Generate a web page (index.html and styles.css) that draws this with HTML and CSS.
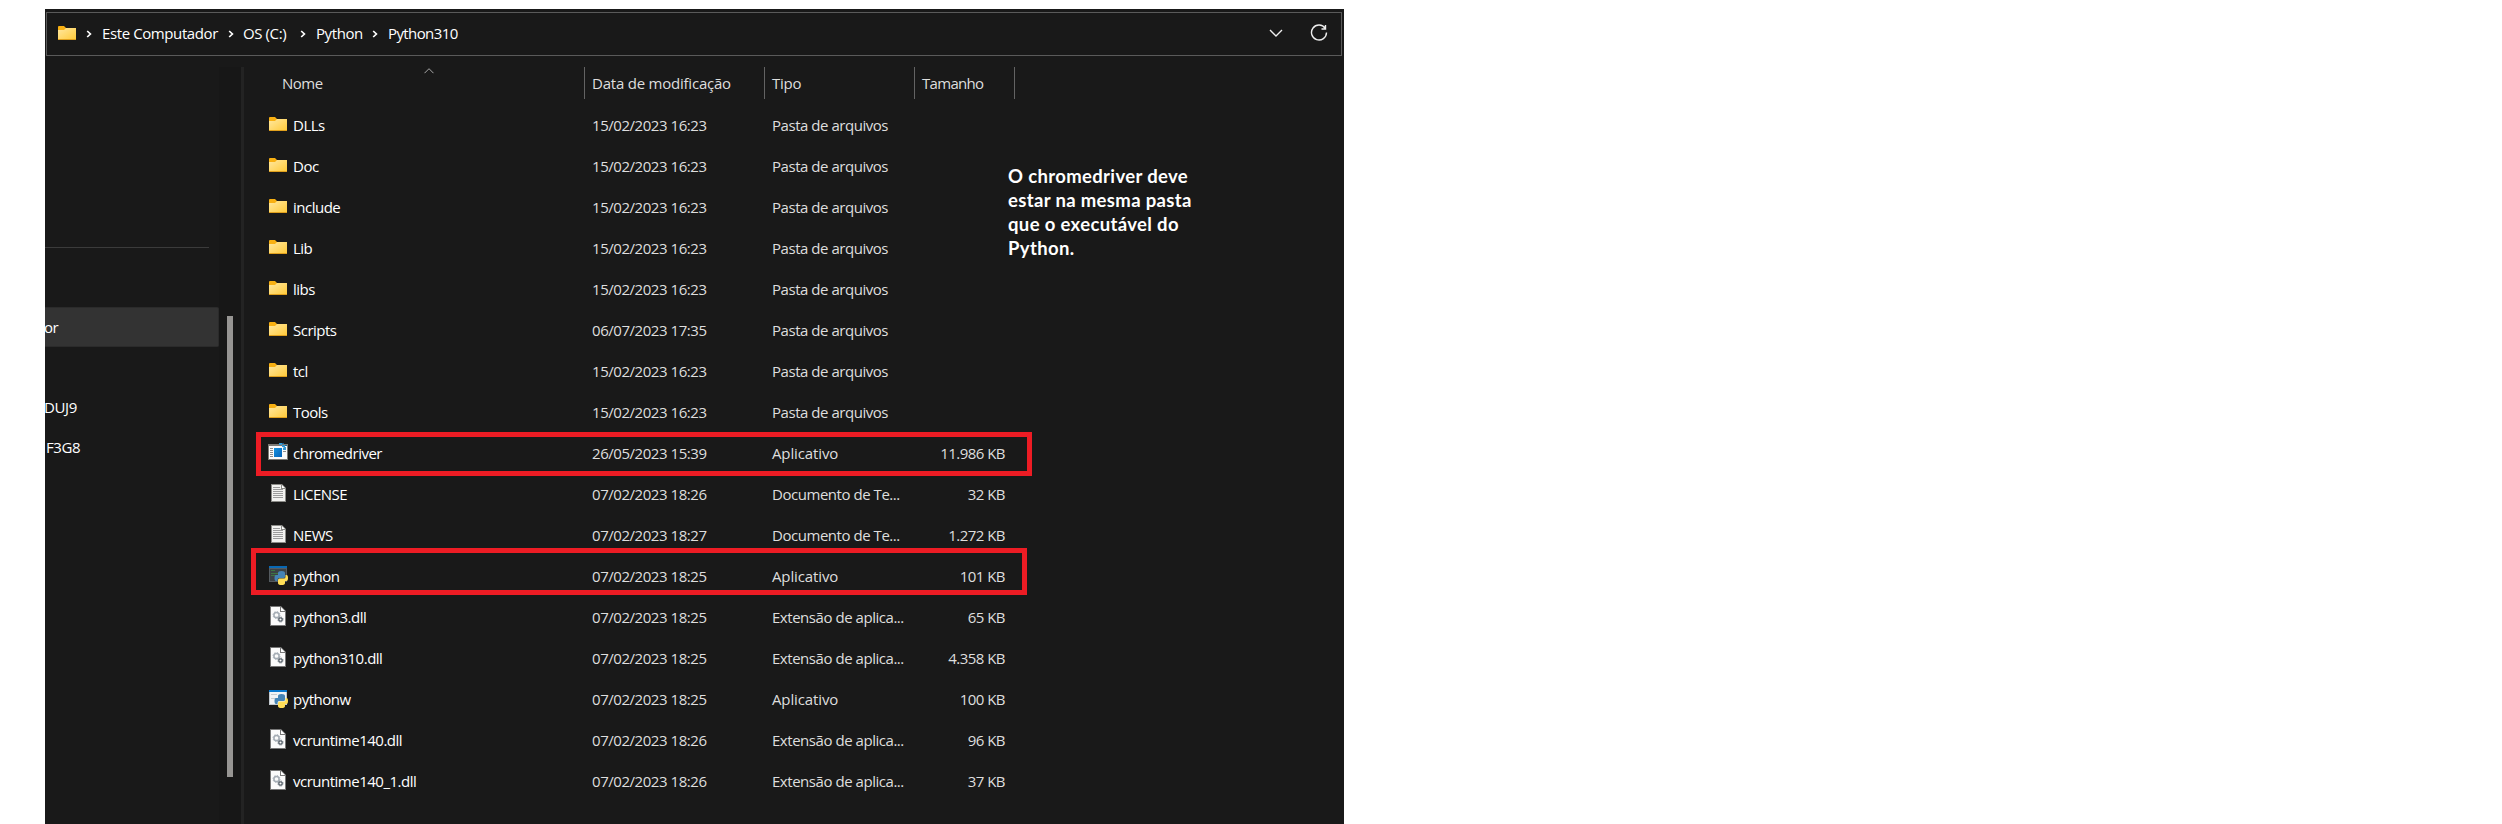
FILE: index.html
```
<!DOCTYPE html>
<html lang="pt-BR">
<head>
<meta charset="utf-8">
<title>Python310</title>
<link rel="stylesheet" href="styles.css">
</head>
<body>
<svg class="defs" width="0" height="0">
  <defs>
    <linearGradient id="gold" x1="0" y1="0" x2="1" y2="1"><stop offset="0" stop-color="#ffe8a0"/><stop offset="1" stop-color="#ffc937"/></linearGradient>
    <linearGradient id="blue" x1="0" y1="0" x2="1" y2="1"><stop offset="0" stop-color="#1593e2"/><stop offset="1" stop-color="#0562b8"/></linearGradient>
    <g id="snake"><path d="M10 10V8q0-2 3.500-2T17 8v3.500q0 1.500-1.500 1.500H11q-1.500 0-1.500 3H8q-1.500 0-1.500-3T8 10z" fill="#4584b6"/><path d="M17.500 10H18.500q1.500 0 1.500 3t-1.500 3H17v2q0 2-3.500 2T10 18v-3q0-1.500 1.500-1.500H16q1.500 0 1.500-1.500z" fill="#ffde57"/></g>
  </defs>
  <symbol id="folder" viewBox="0 0 20 20"><path d="M1 4q0-1 1-1h5l2 2h9q1 0 1 1v3H1z" fill="#f8b012"/><path d="M1 7h6l2-2h10v12H1z" fill="url(#gold)"/><path d="M1 16h18v1H1z" fill="#e0a01d"/></symbol>
  <symbol id="app" viewBox="0 0 20 20"><path d="M0 2h20v16H0z" fill="#7b7975"/><path d="M1 4h18v13H1z" fill="#fafafa"/><path d="M2 6.500h3M2 8.500h3M2 10.500h3M2 12.500h3M2 14.500h3M15 9.500h3" stroke="#8b8b8b"/><path d="M6 6h8v9H6z" fill="url(#blue)"/><path d="M11 1h3v2h-3zM14 3h3v2h-3zM16 5h2v3h-3V6z" fill="#3499d4"/><path d="M14 1h2v1h-2zM17 3h2v1h-2z" fill="#176394"/></symbol>
  <symbol id="text" viewBox="0 0 20 20"><path d="M3 1h11l4 4v14H3z" fill="#8b8b87"/><path d="M4 2h9v4h4v12H4z" fill="#f2f2f0"/><path d="M14 2v3h3" fill="#fff"/><path d="M5 4.500h7M5 6.500h10M5 8.500h10M5 10.500h10M5 12.500h10M5 14.500h10" stroke="#9c9c9c"/></symbol>
  <symbol id="python" viewBox="0 0 20 20"><path d="M1 1h18v16H1z" fill="#555b60"/><path d="M1 1h18v2H1z" fill="#0868b4"/><path d="M2 4h16v12H2z" fill="#3c4246"/><path d="M3 5.500h4M3 8.500h8M3 10.500h5" stroke="#3d7543"/><use href="#snake"/></symbol>
  <symbol id="pythonw" viewBox="0 0 20 20"><path d="M1 2h18v15H1z" fill="#c2c8cd"/><path d="M1 2h18v2H1z" fill="#0878ce"/><path d="M2 4h16v12H2z" fill="#f1f3f5"/><path d="M3 6.500h6M3 10.500h5" stroke="#c6cbd0"/><use href="#snake"/></symbol>
  <symbol id="dll" viewBox="0 0 20 20"><path d="M2 0h11l5 5v15H2z" fill="#777"/><path d="M3 1h9v5h5v13H3z" fill="#fbfbfb"/><path d="M13 1v4h4z" fill="#fff"/><circle cx="8.500" cy="9" r="2.600" fill="none" stroke="#a5adb5" stroke-width="1.500"/><circle cx="8.500" cy="9" r="3.500" fill="none" stroke="#a5adb5" stroke-dasharray="1.200 1.550"/><circle cx="12.500" cy="13.500" r="1.700" fill="none" stroke="#59636c" stroke-width="1.300"/><circle cx="12.500" cy="13.500" r="2.500" fill="none" stroke="#59636c" stroke-dasharray="1 .96"/></symbol>
  <symbol id="chev" viewBox="0 0 6 8"><path d="M1.200 1L4.400 4L1.200 7" fill="none" stroke="#fff" stroke-width="1.700"/></symbol>
</svg>
<div class="window">
  <div class="address">
    <svg class="ico"><use href="#folder"/></svg>
    <svg class="sep s1"><use href="#chev"/></svg><span class="c1">Este Computador</span>
    <svg class="sep"><use href="#chev"/></svg><span class="c2">OS (C:)</span>
    <svg class="sep"><use href="#chev"/></svg><span class="c3">Python</span>
    <svg class="sep"><use href="#chev"/></svg><span class="c4">Python310</span>
    <div class="tools">
      <svg width="14" height="8" viewBox="0 0 14 8"><path d="M1 1l6 6 6-6" fill="none" stroke="#eee" stroke-width="1.400"/></svg>
      <svg width="18" height="18" viewBox="0 0 18 18"><path d="M15.200 4.300A7.500 7.500 0 1 0 16.500 8.500M15.500 1v4h-4" fill="none" stroke="#eee" stroke-width="1.400"/></svg>
    </div>
  </div>
  <div class="main">
    <div class="nav">
      <div class="rule"></div>
      <div class="item selected"><span>or</span></div>
      <div class="item second"><span>DUJ9</span></div>
      <div class="item third"><span>F3G8</span></div>
    </div>
    <div class="scroll"><div class="thumb"></div></div>
    <div class="files">
      <div class="row head"><div class="name">Nome<svg class="sort" width="10" height="6" viewBox="0 0 10 6"><path d="M.5 5.200L5 .7l4.500 4.500" fill="none" stroke="#aaa"/></svg></div><div class="date">Data de modificação</div><div class="type">Tipo</div><div class="size">Tamanho</div></div>
      <div class="row"><div class="name"><svg class="ico"><use href="#folder"/></svg>DLLs</div><div class="date">15/02/2023 16:23</div><div class="type">Pasta de arquivos</div><div class="size"></div></div>
      <div class="row"><div class="name"><svg class="ico"><use href="#folder"/></svg>Doc</div><div class="date">15/02/2023 16:23</div><div class="type">Pasta de arquivos</div><div class="size"></div></div>
      <div class="row"><div class="name"><svg class="ico"><use href="#folder"/></svg>include</div><div class="date">15/02/2023 16:23</div><div class="type">Pasta de arquivos</div><div class="size"></div></div>
      <div class="row"><div class="name"><svg class="ico"><use href="#folder"/></svg>Lib</div><div class="date">15/02/2023 16:23</div><div class="type">Pasta de arquivos</div><div class="size"></div></div>
      <div class="row"><div class="name"><svg class="ico"><use href="#folder"/></svg>libs</div><div class="date">15/02/2023 16:23</div><div class="type">Pasta de arquivos</div><div class="size"></div></div>
      <div class="row"><div class="name"><svg class="ico"><use href="#folder"/></svg>Scripts</div><div class="date">06/07/2023 17:35</div><div class="type">Pasta de arquivos</div><div class="size"></div></div>
      <div class="row"><div class="name"><svg class="ico"><use href="#folder"/></svg>tcl</div><div class="date">15/02/2023 16:23</div><div class="type">Pasta de arquivos</div><div class="size"></div></div>
      <div class="row"><div class="name"><svg class="ico"><use href="#folder"/></svg>Tools</div><div class="date">15/02/2023 16:23</div><div class="type">Pasta de arquivos</div><div class="size"></div></div>
      <div class="row"><div class="name"><svg class="ico"><use href="#app"/></svg>chromedriver</div><div class="date">26/05/2023 15:39</div><div class="type app">Aplicativo</div><div class="size">11.986 KB</div></div>
      <div class="row"><div class="name"><svg class="ico"><use href="#text"/></svg>LICENSE</div><div class="date">07/02/2023 18:26</div><div class="type">Documento de Te...</div><div class="size">32 KB</div></div>
      <div class="row"><div class="name"><svg class="ico"><use href="#text"/></svg>NEWS</div><div class="date">07/02/2023 18:27</div><div class="type">Documento de Te...</div><div class="size">1.272 KB</div></div>
      <div class="row"><div class="name"><svg class="ico"><use href="#python"/></svg>python</div><div class="date">07/02/2023 18:25</div><div class="type app">Aplicativo</div><div class="size">101 KB</div></div>
      <div class="row"><div class="name"><svg class="ico"><use href="#dll"/></svg>python3.dll</div><div class="date">07/02/2023 18:25</div><div class="type">Extensão de aplica...</div><div class="size">65 KB</div></div>
      <div class="row"><div class="name"><svg class="ico"><use href="#dll"/></svg>python310.dll</div><div class="date">07/02/2023 18:25</div><div class="type">Extensão de aplica...</div><div class="size">4.358 KB</div></div>
      <div class="row"><div class="name"><svg class="ico"><use href="#pythonw"/></svg>pythonw</div><div class="date">07/02/2023 18:25</div><div class="type app">Aplicativo</div><div class="size">100 KB</div></div>
      <div class="row"><div class="name"><svg class="ico"><use href="#dll"/></svg>vcruntime140.dll</div><div class="date">07/02/2023 18:26</div><div class="type">Extensão de aplica...</div><div class="size">96 KB</div></div>
      <div class="row"><div class="name"><svg class="ico"><use href="#dll"/></svg>vcruntime140_1.dll</div><div class="date">07/02/2023 18:26</div><div class="type">Extensão de aplica...</div><div class="size">37 KB</div></div>
    </div>
  </div>
  <div class="mark first"></div>
  <div class="mark last"></div>
  <p class="note">O chromedriver deve<br>estar na mesma pasta<br>que o executável do<br>Python.</p>
</div>
</body>
</html>
```
FILE: styles.css
```
* { box-sizing: border-box; }
body { margin: 0; height: 824px; padding: 9px 0 0 45px; background: #fff; overflow: hidden; font-family: "Open Sans", "Noto Sans", sans-serif; font-size: 15px; letter-spacing: -0.4px; }
.defs { position: absolute; }
svg { display: block; flex: none; }
.window { position: relative; width: 1299px; height: 815px; padding: 3px 2px 0 1px; background: #191919; color: #fff; overflow: hidden; display: flex; flex-direction: column; }
.ico { width: 20px; height: 20px; }
.address { height: 44px; border: 1px solid #5a5a5a; display: flex; align-items: center; padding: 0 13px 2px 10px; white-space: nowrap; }
.sep { width: 6px; height: 8px; margin-top: 1px; }
.s1 { margin-left: 9px; }
.c1 { margin-left: 10px; width: 126px; }
.c2 { margin-left: 9px; width: 57px; }
.c3 { margin-left: 10px; width: 56px; }
.c4 { margin-left: 10px; letter-spacing: -0.6px; }
.tools { margin-left: auto; display: flex; align-items: center; gap: 27px; }
.main { flex: 1; margin-left: -1px; display: flex; padding-top: 11px; }
.nav { width: 174px; padding-top: 180px; }
.rule { width: 164px; height: 1px; background: #3b3b3b; }
.item { height: 40px; display: flex; align-items: center; overflow: hidden; }
.item span { margin-left: -1px; }
.selected { margin-top: 59px; background: #333; border: 1px solid #2b2b2b; border-left: 0; border-radius: 0 2px 2px 0; }
.second { margin-top: 40px; }
.third { margin-top: 1px; padding-bottom: 2px; }
.third span { margin-left: 1px; }
.scroll { width: 25px; background: #171717; border-right: 3px solid #232323; padding: 249px 0 0 8px; }
.thumb { width: 6px; height: 461px; background: #979593; }
.files { display: flex; flex-direction: column; }
.row { display: grid; grid-template-columns: 341px 180px 150px 100px; height: 41px; align-items: center; white-space: nowrap; color: #dedede; padding-bottom: 1px; }
.name { display: flex; align-items: center; gap: 5px; padding-left: 24px; color: #fff; letter-spacing: -0.5px; }
.name .ico { margin-top: -2px; }
.date { padding-left: 7px; letter-spacing: -0.45px; }
.type { padding-left: 7px; letter-spacing: -0.46px; }
.app { letter-spacing: -0.12px; }
.size { text-align: right; padding-right: 10px; letter-spacing: -0.53px; }
.head { height: 32px; margin-bottom: 6px; padding: 0; }
.head > div { height: 32px; display: flex; align-items: center; border-right: 1px solid #636363; color: #dedede; letter-spacing: -0.22px; }
.head .name { position: relative; padding-left: 38px; letter-spacing: -0.5px; }
.head .size { padding: 0 0 0 7px; letter-spacing: -0.7px; }
.sort { position: absolute; left: 180px; top: 1px; }
.mark { position: absolute; border: 5px solid #ed1c24; }
.first { left: 211px; top: 423px; width: 776px; height: 44px; }
.last { left: 206px; top: 539px; width: 776px; height: 47px; }
.note { position: absolute; left: 963px; top: 155px; margin: 0; font: 700 18.5px/24px Lato, sans-serif; letter-spacing: 0.35px; }
```
